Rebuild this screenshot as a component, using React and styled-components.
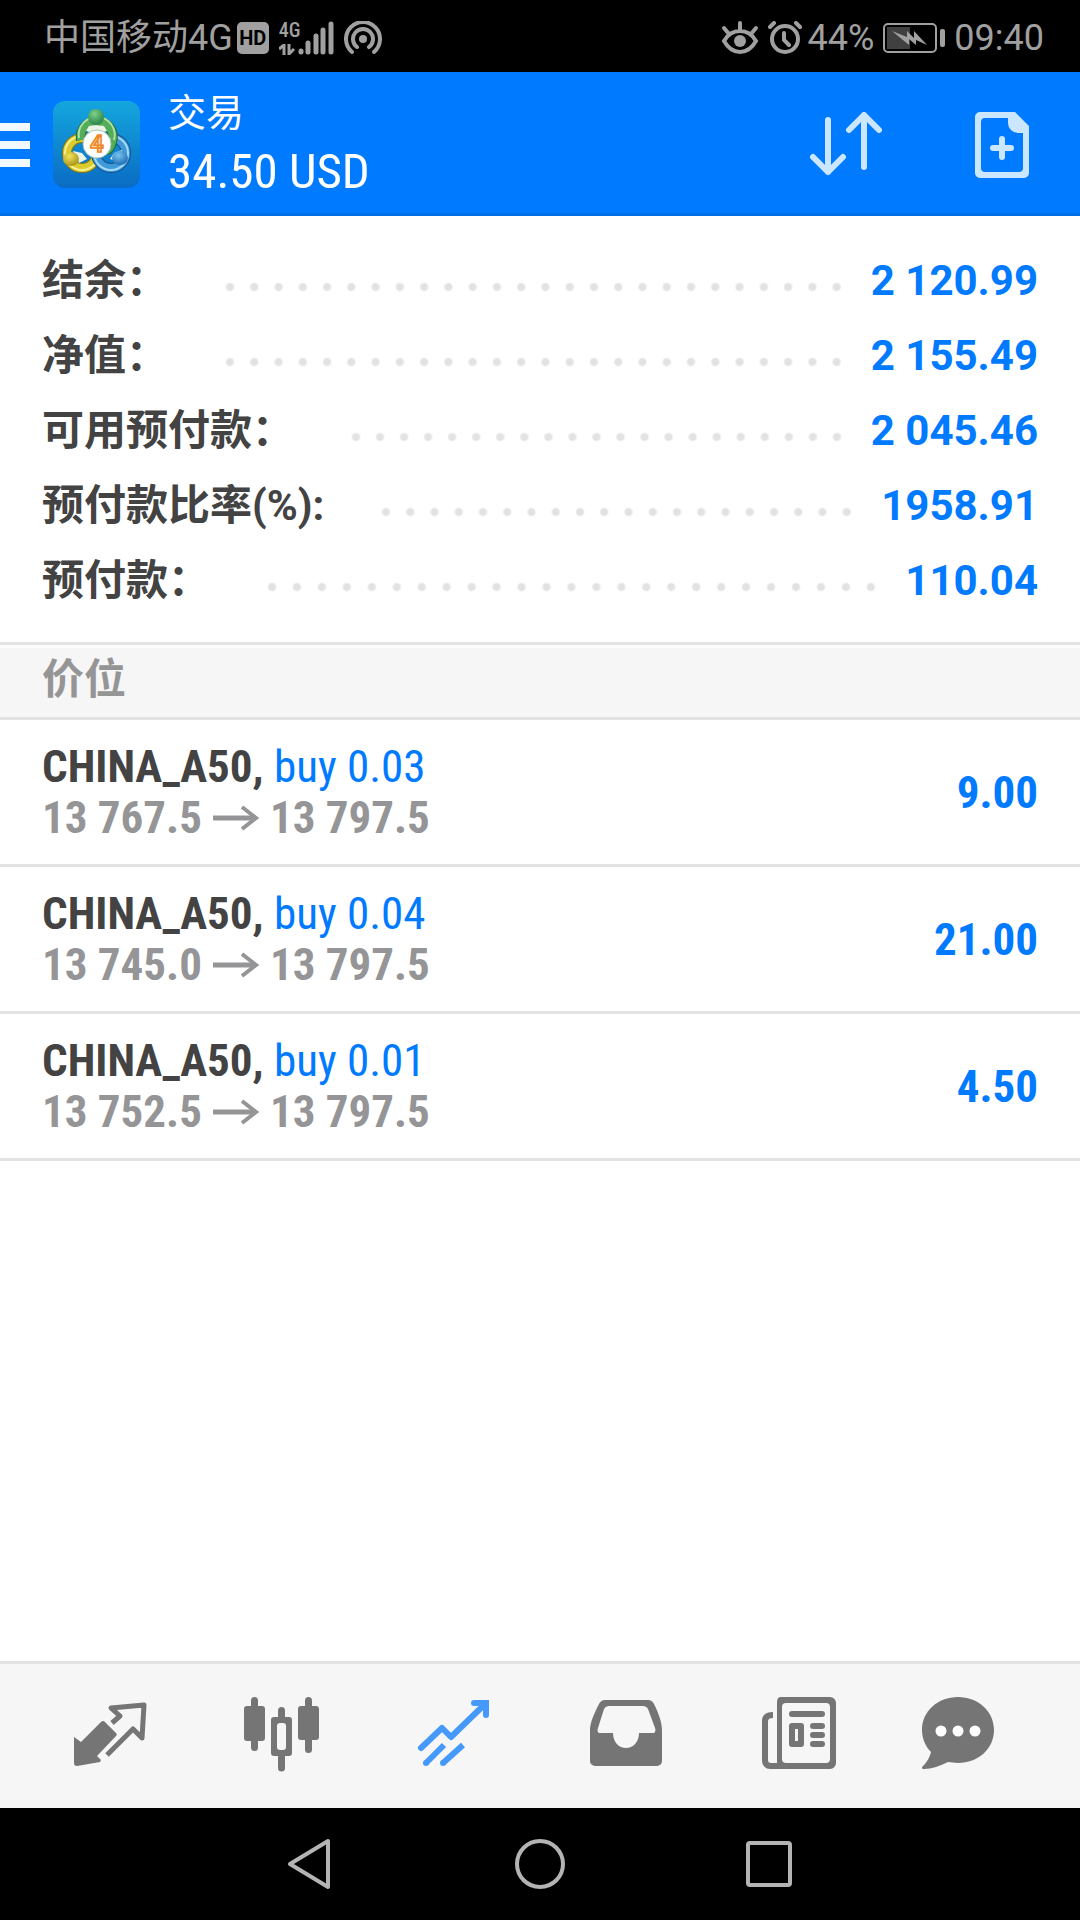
import React, { useState } from 'react'
import styled, { createGlobalStyle } from 'styled-components'

const GlobalStyle = createGlobalStyle`
    * {
        box-sizing: border-box;
    }
    body {
        margin: 0;
        background: #fff;
        font-family: Roboto, "Noto Sans CJK SC", sans-serif;
    }
    button {
        padding: 0;
        border: 0;
        background: none;
        color: inherit;
        font: inherit;
        cursor: pointer;
    }
    svg {
        display: block;
        flex: none;
    }
`

const condensed = `"Roboto Condensed", Roboto, "Noto Sans CJK SC", sans-serif`

const Page = styled.div`
    display: flex;
    flex-direction: column;
    min-height: 100vh;
`

const StatusBar = styled.div`
    display: flex;
    align-items: center;
    justify-content: space-between;
    height: 72px;
    padding: 4px 36px 0 44px;
    background: #000;
    color: #a0a0a0;
    font-size: 36px;
    line-height: 40px;
`

const StatusGroup = styled.div`
    display: flex;
    align-items: center;
    gap: ${props => props.$gap}px;
`

const HdBadge = styled.span`
    width: 32px;
    height: 32px;
    border-radius: 5px;
    background: #a0a0a0;
    color: #000;
    font-size: 20px;
    font-weight: 700;
    line-height: 32px;
    text-align: center;
`

const Network = styled.span`
    display: flex;
    flex-direction: column;
    align-items: flex-start;
    gap: 6px;
    width: 18px;
    font-family: ${condensed};
    font-size: 20px;
    font-weight: 500;
    line-height: 16px;
`

const Signal = styled.span`
    display: flex;
    align-items: center;
    gap: 1px;
`

const Header = styled.header`
    display: flex;
    align-items: center;
    height: 144px;
    padding: 4px 51px 0 0;
    border-bottom: 3px solid #0070e6;
    background: #007aff;
    color: #fff;
`

const MenuButton = styled.button`
    display: flex;
    flex-direction: column;
    gap: 10px;
    width: 30px;
    margin-right: 23px;
`

const MenuLine = styled.span`
    height: 8px;
    background: #f2f9ff;
`

const Heading = styled.div`
    flex: 1;
    margin-left: 28px;
`

const Title = styled.h1`
    margin: 0;
    font-size: 38px;
    font-weight: 400;
    line-height: 54px;
`

const Profit = styled.div`
    font-family: ${condensed};
    font-size: 49px;
    line-height: 64px;
`

const Actions = styled.div`
    display: flex;
    align-items: center;
    gap: 92px;
`

const Summary = styled.dl`
    margin: 0;
    padding: 27px 42px 24px;
    border-bottom: 3px solid #e3e3e3;
    font-size: 42px;
    font-weight: 700;
    line-height: 75px;
`

const SummaryRow = styled.div`
    display: flex;
    height: 75px;
`

const Label = styled.dt`
    color: #434343;
`

const Dots = styled.span`
    flex: 1;
    height: 75px;
    margin: 0 22px 0 50px;
    background-image: radial-gradient(circle at 12px 44px, #e2e2e2 3px, transparent 5px);
    background-size: 24px 75px;
    background-repeat: space no-repeat;
`

const Amount = styled.dd`
    margin: 0;
    color: #007aff;
`

const SectionTitle = styled.h2`
    margin: 0;
    padding: 0 42px;
    height: 75px;
    border-top: 3px solid #fcfcfc;
    border-bottom: 3px solid #e3e3e3;
    background: #f6f6f7;
    color: #959595;
    font-size: 42px;
    font-weight: 700;
    line-height: 64px;
`

const Positions = styled.ul`
    flex: 1;
    margin: 0;
    padding: 0;
    list-style: none;
`

const Position = styled.li`
    display: flex;
    align-items: center;
    justify-content: space-between;
    height: 147px;
    padding: 0 42px;
    border-bottom: 3px solid #e3e3e3;
    font-family: ${condensed};
    font-size: 45px;
    font-weight: 700;
    line-height: 51px;
`

const Symbol = styled.div`
    color: #434343;
`

const Volume = styled.span`
    color: #007aff;
    font-weight: 400;
`

const Prices = styled.div`
    display: flex;
    align-items: center;
    gap: 11px;
    color: #959597;
`

const Gain = styled.div`
    color: #007aff;
`

const TabBar = styled.nav`
    display: grid;
    grid-template-columns: repeat(6, 1fr);
    height: 147px;
    padding: 0 24px;
    border-top: 3px solid #e3e3e3;
    background: #f6f6f6;
`

const Tab = styled.button`
    display: flex;
    align-items: center;
    justify-content: center;
    color: ${props => props.$active ? '#4499fb' : '#757575'};
`

const SystemBar = styled.div`
    display: flex;
    align-items: center;
    justify-content: center;
    gap: 178px;
    height: 112px;
    background: #000;
    color: #b4b4b4;
`

const summary = [
    { label: '结余：', value: '2 120.99' },
    { label: '净值：', value: '2 155.49' },
    { label: '可用预付款：', value: '2 045.46' },
    { label: '预付款比率(%):', value: '1958.91' },
    { label: '预付款：', value: '110.04' },
]

const positions = [
    { id: 1, symbol: 'CHINA_A50', side: 'buy 0.03', open: '13 767.5', current: '13 797.5', gain: '9.00' },
    { id: 2, symbol: 'CHINA_A50', side: 'buy 0.04', open: '13 745.0', current: '13 797.5', gain: '21.00' },
    { id: 3, symbol: 'CHINA_A50', side: 'buy 0.01', open: '13 752.5', current: '13 797.5', gain: '4.50' },
]

const TabIcon = ({ children }) => (
    <svg width="96" height="80" viewBox="0 0 96 80" fill="currentColor">{children}</svg>
)

// x offsets inside the 96px box keep the glyphs optically spaced
const tabs = [
    {
        id: 'quotes',
        label: '行情',
        icon: (
            <TabIcon>
                <path d="M12 41l7 5 20-20a3 3 0 0 1 4 0l11 11a2 2 0 0 1 0 3L35 60l4 4-1 2-23 4a3 3 0 0 1-3-3z" />
                <path d="M50 27l8-7-9-8 33-3-2 33-9-9-26 26" fill="none" stroke="currentColor" strokeWidth="5" strokeLinejoin="round" />
            </TabIcon>
        ),
    },
    {
        id: 'chart',
        label: '图表',
        icon: (
            <TabIcon>
                <rect x="10" y="10" width="21" height="35" rx="3" />
                <rect x="64" y="10" width="21" height="34" rx="3" />
                <path d="M20.500 4.500v47M47.500 14.500v12M47.500 60v12M74.500 4.500v49" stroke="currentColor" strokeWidth="7" strokeLinecap="round" />
                <rect x="37" y="21" width="21" height="39" rx="3" />
                <rect x="43" y="27" width="9" height="27" rx="3" fill="#f6f6f6" />
            </TabIcon>
        ),
    },
    {
        id: 'trade',
        label: '交易',
        icon: (
            <TabIcon>
                <g fill="none" stroke="currentColor" strokeWidth="6">
                    <path d="M15 52l21-20 9 9L79 8" strokeLinecap="round" strokeLinejoin="round" />
                    <path d="M68 7h12v12" strokeLinecap="round" />
                    <path d="M20 67l18-18M37 67l20-18" />
                </g>
                <circle cx="20" cy="67" r="3" />
                <circle cx="37" cy="67" r="3" />
            </TabIcon>
        ),
    },
    {
        id: 'history',
        label: '历史',
        icon: (
            <TabIcon>
                <path d="M27 4h43c3 0 5 2 6 4 4 8 8 18 8 26v31a5 5 0 0 1-5 5H17a5 5 0 0 1-5-5V34c0-8 5-18 9-26 1-2 3-4 6-4zm4 6c-2 0-4 1-5 3l-6 19c-1 3 0 5 2 5h13c0 9 6 15 13 15s13-6 13-15h14c2 0 3-2 2-5l-7-19c-1-2-3-3-5-3z" fillRule="evenodd" />
            </TabIcon>
        ),
    },
    {
        id: 'news',
        label: '新闻',
        icon: (
            <TabIcon>
                <path d="M31 1h49a6 6 0 0 1 6 6v60a6 6 0 0 1-6 6H20a8 8 0 0 1-8-8V25c0-6 4-9 11-9v6c-3 0-5 1-5 3v39c0 2 1 3 3 3h6V7c0-4 1-6 4-6zm5 6a4 4 0 0 0-4 4v52a4 4 0 0 0 4 4h40a4 4 0 0 0 4-4V11a4 4 0 0 0-4-4z" fillRule="evenodd" />
                <path d="M42 18h30M63 30h9M63 39h9M63 48h9" stroke="currentColor" strokeWidth="6" strokeLinecap="round" />
                <path d="M42 27h9a3 3 0 0 1 3 3v18a3 3 0 0 1-3 3h-9a3 3 0 0 1-3-3V30a3 3 0 0 1 3-3zm3 6v12h3V33z" fillRule="evenodd" />
            </TabIcon>
        ),
    },
    {
        id: 'messages',
        label: '信息',
        icon: (
            <TabIcon>
                <path d="M36 1c20 0 36 14 36 33S56 67 36 67c-4 0-7-1-10-1-8 4-16 7-24 7-2 0-3-1-1-3 5-5 7-10 8-14C3 50 0 42 0 34 0 15 16 1 36 1z" />
                <g fill="#fff">
                    <circle cx="19" cy="35" r="5.500" />
                    <circle cx="36" cy="35" r="5.500" />
                    <circle cx="53" cy="35" r="5.500" />
                </g>
            </TabIcon>
        ),
    },
]

const Logo = () => (
    <svg width="87" height="87" viewBox="0 0 87 87">
        <defs>
            <linearGradient id="plate" x1="0" y1="0" x2="0" y2="1">
                <stop offset="0" stopColor="#14a6dd" />
                <stop offset="1" stopColor="#0a6bc4" />
            </linearGradient>
            <radialGradient id="green" cx="0.4" cy="0.3" r="0.8">
                <stop offset="0" stopColor="#7fd08a" />
                <stop offset="1" stopColor="#1d7a41" />
            </radialGradient>
            <radialGradient id="yellow" cx="0.4" cy="0.3" r="0.8">
                <stop offset="0" stopColor="#f3e35a" />
                <stop offset="1" stopColor="#a08a16" />
            </radialGradient>
            <radialGradient id="blue" cx="0.4" cy="0.3" r="0.8">
                <stop offset="0" stopColor="#79c4f0" />
                <stop offset="1" stopColor="#1463ad" />
            </radialGradient>
        </defs>
        <rect width="87" height="87" rx="12" fill="url(#plate)" />
        <g fill="none">
            <circle cx="29" cy="52" r="15" stroke="#7e7a1c" strokeWidth="10" />
            <circle cx="29" cy="52" r="15" stroke="#dccb2e" strokeWidth="8" />
            <circle cx="29" cy="52" r="17" stroke="#f8ee90" strokeWidth="2" />
            <circle cx="58" cy="52" r="15" stroke="#15538f" strokeWidth="10" />
            <circle cx="58" cy="52" r="15" stroke="#3f9ada" strokeWidth="8" />
            <circle cx="58" cy="52" r="17" stroke="#a4d9f6" strokeWidth="2" />
            <path d="M28 39a16 16 0 1 1 31 2c-1 4-3 7-6 9" stroke="#1c6638" strokeWidth="10" />
            <path d="M28 39a16 16 0 1 1 31 2c-1 4-3 7-6 9" stroke="#54ad58" strokeWidth="8" />
            <path d="M26 37a18 18 0 1 1 35 2" stroke="#aee09f" strokeWidth="2" />
        </g>
        <path d="M36 25l7-1 8 1 3 5-10 3-11-3zM20 50l9 2 5 6-8 4zM57 58l4-6 8-3-2 12z" fill="#e9f3e6" />
        <circle cx="43" cy="16" r="8" fill="url(#green)" />
        <ellipse cx="18" cy="58" rx="8" ry="7" fill="url(#yellow)" />
        <ellipse cx="67" cy="57" rx="8" ry="7" fill="url(#blue)" />
        <circle cx="44" cy="43" r="14" fill="#fff" stroke="#a9c4bb" />
        <text x="44" y="51" textAnchor="middle" fontFamily="Roboto, sans-serif" fontSize="24" fontWeight="700" fill="#fbd9a8" stroke="#f08426" strokeWidth="1.500">4</text>
    </svg>
)

const Arrow = () => (
    <svg width="46" height="26" viewBox="0 0 46 26" fill="none" stroke="currentColor" role="img" aria-label="→">
        <path d="M0 13h43" strokeWidth="5" />
        <path d="M29 2l14 11-14 11" strokeWidth="4" />
    </svg>
)

const App = () => {
    const [active, setActive] = useState('trade')

    return (
        <Page>
            <GlobalStyle />
            <StatusBar>
                <StatusGroup $gap={10}>
                    <StatusGroup $gap={4}>
                        <span>中国移动4G</span>
                        <HdBadge>HD</HdBadge>
                    </StatusGroup>
                    <Signal>
                        <Network>
                            4G
                            <svg width="16" height="11" viewBox="0 0 16 11" fill="none" stroke="currentColor" strokeWidth="3">
                                <path d="M0 5l5-4v10M10 0v10l5-5" />
                            </svg>
                        </Network>
                        <svg width="36" height="34" viewBox="0 0 36 34" fill="none" stroke="currentColor" strokeWidth="5" strokeLinecap="round">
                            <path d="M3 30v1M10 22v9M18 15v16M25 9v22M33 3v28" />
                        </svg>
                    </Signal>
                    <svg width="38" height="34" viewBox="0 0 38 34" fill="none" stroke="currentColor" strokeWidth="4" strokeLinecap="round">
                        <circle cx="19" cy="18" r="4" fill="currentColor" stroke="none" />
                        <path d="M13 26a10 10 0 1 1 12 0M8 31a17 17 0 1 1 22 0" />
                    </svg>
                </StatusGroup>
                <StatusGroup $gap={9}>
                    <svg width="38" height="34" viewBox="0 0 38 34" fill="none" stroke="currentColor" strokeWidth="4" strokeLinecap="round">
                        <path d="M3 20c4-7 10-10 16-10s12 3 16 10c-4 7-10 11-16 11S7 27 3 20zM19 2v7M3 7l5 6M35 7l-5 6" />
                        <circle cx="19" cy="20" r="6" fill="currentColor" stroke="none" />
                    </svg>
                    <StatusGroup $gap={6}>
                        <svg width="34" height="34" viewBox="0 0 34 34" fill="none" stroke="currentColor" strokeWidth="4" strokeLinecap="round">
                            <circle cx="17" cy="18" r="13" />
                            <path d="M16 12v7l5 5M2 6l4-4M32 6l-4-4" />
                        </svg>
                        <span>44%</span>
                    </StatusGroup>
                    <svg width="62" height="30" viewBox="0 0 62 30">
                        <rect x="1" y="1" width="52" height="28" rx="4" fill="none" stroke="currentColor" strokeWidth="2" />
                        <rect x="4" y="4" width="23" height="22" fill="#404040" />
                        <path d="M9 8l15 6V8l7 7V8l13 14-11-5v5l-7-6v6z" fill="currentColor" />
                        <rect x="57" y="6" width="5" height="18" rx="2" fill="currentColor" />
                    </svg>
                    <span>09:40</span>
                </StatusGroup>
            </StatusBar>

            <Header>
                <MenuButton aria-label="菜单">
                    <MenuLine />
                    <MenuLine />
                    <MenuLine />
                </MenuButton>
                <Logo />
                <Heading>
                    <Title>交易</Title>
                    <Profit>34.50 USD</Profit>
                </Heading>
                <Actions>
                    <button aria-label="排序">
                        <svg width="74" height="66" viewBox="0 0 74 66" fill="none" stroke="#cbe7ff" strokeWidth="6" strokeLinecap="round" strokeLinejoin="round">
                            <path d="M19 8v52M4 45l15 15 15-15M55 55V3M40 18L55 3l15 15" />
                        </svg>
                    </button>
                    <button aria-label="新订单">
                        <svg width="54" height="66" viewBox="0 0 54 66">
                            <path d="M5 0h35l14 14v47a5 5 0 0 1-5 5H5a5 5 0 0 1-5-5V5a5 5 0 0 1 5-5zm5 6a4 4 0 0 0-4 4v46a4 4 0 0 0 4 4h34a4 4 0 0 0 4-4V21h-5A10 10 0 0 1 33 11V6z" fill="#cbe7ff" fillRule="evenodd" />
                            <path d="M27 27v18M18 36h18" stroke="#cbe7ff" strokeWidth="6" strokeLinecap="round" />
                        </svg>
                    </button>
                </Actions>
            </Header>

            <Summary>
                {summary.map(row => (
                    <SummaryRow key={row.label}>
                        <Label>{row.label}</Label>
                        <Dots />
                        <Amount>{row.value}</Amount>
                    </SummaryRow>
                ))}
            </Summary>

            <SectionTitle>价位</SectionTitle>
            <Positions>
                {positions.map(item => (
                    <Position key={item.id}>
                        <div>
                            <Symbol>
                                {item.symbol}, <Volume>{item.side}</Volume>
                            </Symbol>
                            <Prices>
                                <span>{item.open}</span>
                                <Arrow />
                                <span>{item.current}</span>
                            </Prices>
                        </div>
                        <Gain>{item.gain}</Gain>
                    </Position>
                ))}
            </Positions>

            <TabBar>
                {tabs.map(tab => (
                    <Tab
                        key={tab.id}
                        aria-label={tab.label}
                        $active={active === tab.id}
                        onClick={() => setActive(tab.id)}
                    >
                        {tab.icon}
                    </Tab>
                ))}
            </TabBar>

            <SystemBar>
                <button aria-label="返回">
                    <svg width="52" height="52" viewBox="0 0 52 52" fill="none" stroke="currentColor" strokeWidth="4" strokeLinejoin="round">
                        <path d="M44 3v46L6 26z" />
                    </svg>
                </button>
                <button aria-label="主屏幕">
                    <svg width="52" height="52" viewBox="0 0 52 52" fill="none" stroke="currentColor" strokeWidth="4">
                        <circle cx="26" cy="26" r="23" />
                    </svg>
                </button>
                <button aria-label="最近任务">
                    <svg width="52" height="52" viewBox="0 0 52 52" fill="none" stroke="currentColor" strokeWidth="4">
                        <rect x="4" y="5" width="42" height="42" rx="2" />
                    </svg>
                </button>
            </SystemBar>
        </Page>
    )
}

export default App
